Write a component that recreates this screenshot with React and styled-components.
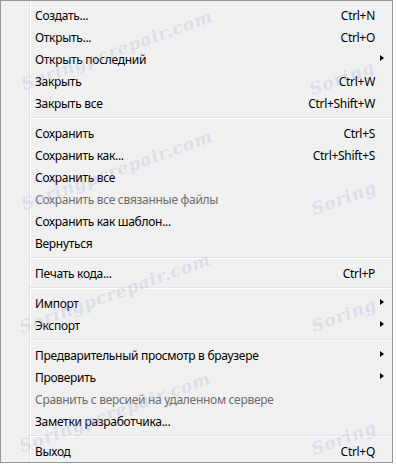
import React from "react";
import styled, { createGlobalStyle } from "styled-components";

const Global = createGlobalStyle`
  html, body { margin: 0; padding: 0; background: #ffffff; }
  body { font-family: "Noto Sans", "DejaVu Sans", sans-serif; }
`;

const Menu = styled.div`
  position: relative;
  box-sizing: border-box;
  width: 393px;
  height: 463px;
  border: 1px solid #979797;
  padding: 3px 0 0 0;
  overflow: hidden;
  background: linear-gradient(
    to right,
    #f0f0f0 0,
    #f0f0f0 28px,
    #e2e3e3 28px,
    #e2e3e3 29px,
    #ffffff 29px,
    #ffffff 30px,
    #f0f0f0 30px
  );
  display: flex;
  flex-direction: column;
`;

const Row = styled.div`
  display: grid;
  grid-template-columns: 1fr auto 17px;
  align-items: center;
  height: 22px;
  padding-left: 34px;
  font-size: 12px;
  letter-spacing: -0.3px;
  color: ${(p) => (p.$disabled ? "#6d6d6d" : "#000000")};
  white-space: nowrap;
`;

const Label = styled.span``;

const Shortcut = styled.span`
  text-align: right;
`;

const ArrowCell = styled.span`
  display: flex;
  align-items: center;
  padding-left: 5px;
`;

const Arrow = styled.span`
  width: 0;
  height: 0;
  border-top: 3.5px solid transparent;
  border-bottom: 3.5px solid transparent;
  border-left: 4px solid #000;
  margin-top: -2px;
`;

const Separator = styled.div`
  height: 8px;
  box-sizing: border-box;
  padding-top: 3px;
  margin-left: 29px;
  margin-right: 1px;
  &::after {
    content: "";
    display: block;
    height: 1px;
    background: #e2e3e3;
    border-bottom: 1px solid #ffffff;
  }
`;

const Watermark = styled.span`
  position: absolute;
  font-family: "DejaVu Serif", serif;
  font-style: italic;
  font-weight: bold;
  font-size: 17px;
  letter-spacing: 0.8px;
  color: rgba(150, 170, 212, 0.26);
  transform: rotate(-20deg);
  transform-origin: left bottom;
  pointer-events: none;
  white-space: nowrap;
  line-height: 18px;
`;

const items = [
  { t: "Создать...", s: "Ctrl+N" },
  { t: "Открыть...", s: "Ctrl+O" },
  { t: "Открыть последний", sub: true },
  { t: "Закрыть", s: "Ctrl+W" },
  { t: "Закрыть все", s: "Ctrl+Shift+W" },
  "sep",
  { t: "Сохранить", s: "Ctrl+S" },
  { t: "Сохранить как...", s: "Ctrl+Shift+S" },
  { t: "Сохранить все" },
  { t: "Сохранить все связанные файлы", d: true },
  { t: "Сохранить как шаблон..." },
  { t: "Вернуться" },
  "sep",
  { t: "Печать кода...", s: "Ctrl+P" },
  "sep",
  { t: "Импорт", sub: true },
  { t: "Экспорт", sub: true },
  "sep",
  { t: "Предварительный просмотр в браузере", sub: true },
  { t: "Проверить", sub: true },
  { t: "Сравнить с версией на удаленном сервере", d: true },
  { t: "Заметки разработчика..." },
  "sep",
  { t: "Выход", s: "Ctrl+Q" },
];

const marks = [
  [24, 92, "Soringpcrepair.com"],
  [312, 97, "Soring"],
  [24, 212, "Soringpcrepair.com"],
  [314, 217, "Soring"],
  [22, 335, "Soringpcrepair.com"],
  [314, 334, "Soring"],
  [22, 454, "Soringpcrepair.com"],
  [314, 457, "Soring"],
];

export default function App() {
  return (
    <>
      <Global />
      <Menu>
        {items.map((it, i) =>
          it === "sep" ? (
            <Separator key={i} />
          ) : (
            <Row key={i} $disabled={it.d}>
              <Label>{it.t}</Label>
              <Shortcut>{it.s || ""}</Shortcut>
              <ArrowCell>{it.sub ? <Arrow /> : null}</ArrowCell>
            </Row>
          )
        )}
        {marks.map(([x, y, t], i) => (
          <Watermark key={"w" + i} style={{ left: x, top: y - 18 }}>
            {t}
          </Watermark>
        ))}
      </Menu>
    </>
  );
}
